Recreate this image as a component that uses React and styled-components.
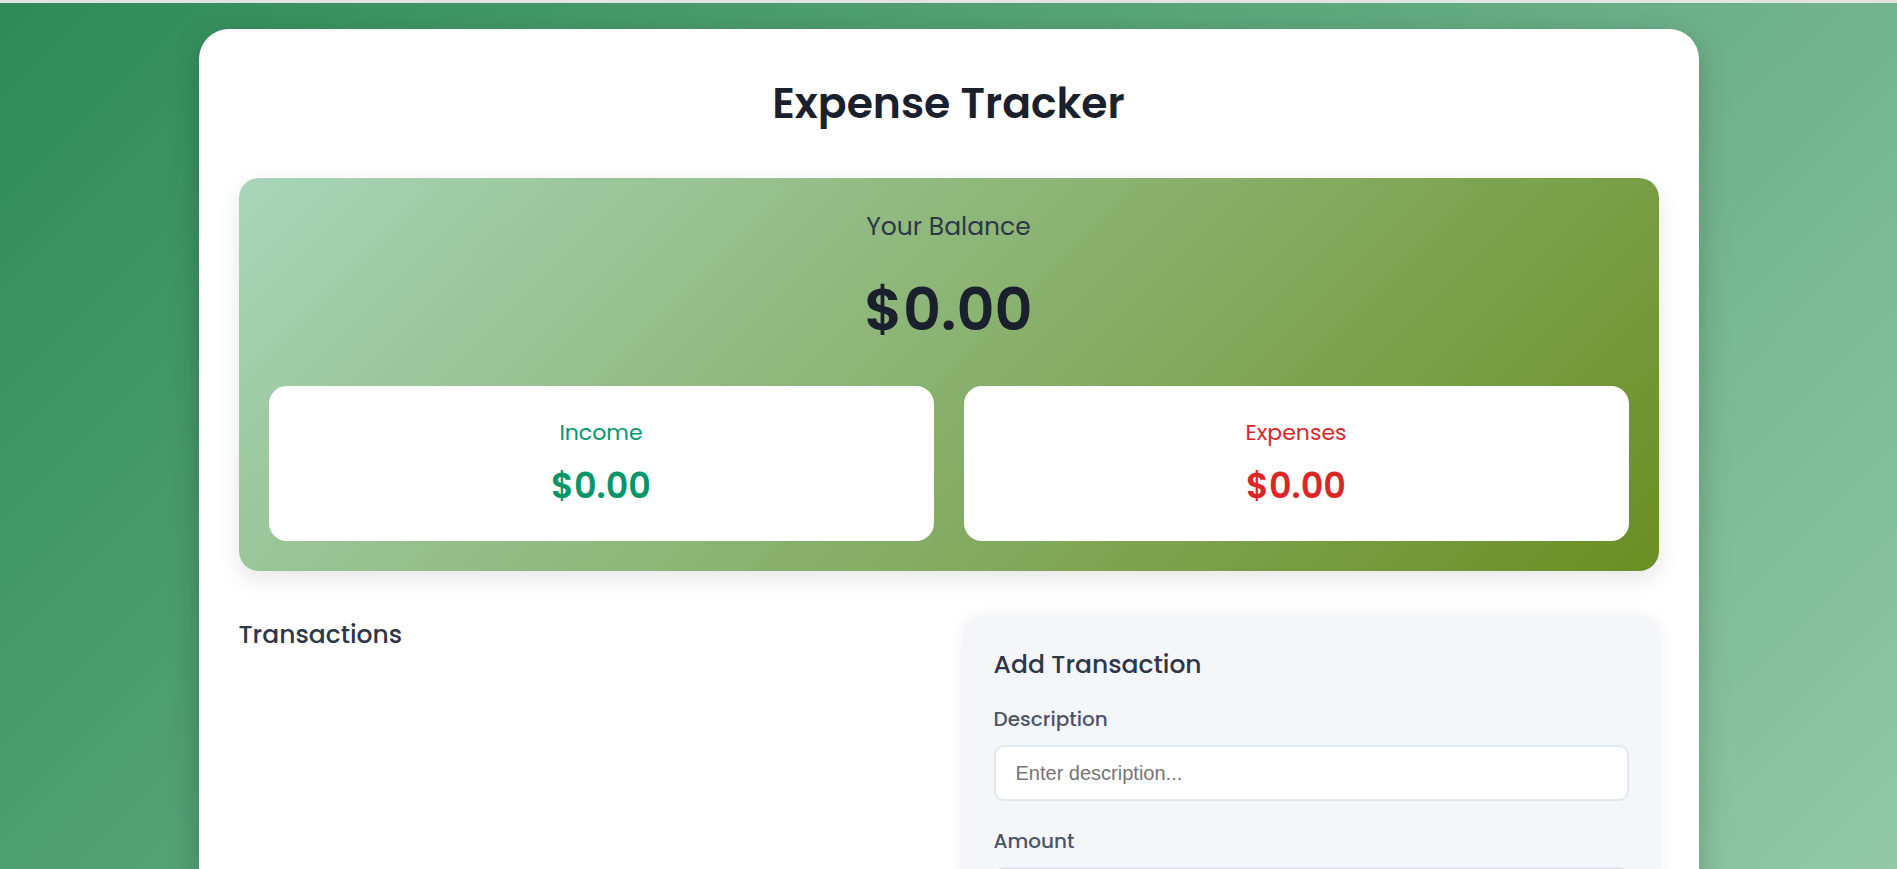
import React, { useState } from "react";
import styled, { createGlobalStyle } from "styled-components";

const GlobalStyle = createGlobalStyle`
  html {
    scrollbar-width: none;
  }
  html::-webkit-scrollbar {
    display: none;
  }
  body {
    margin: 0;
    border-top: 3px solid #e3e3e3;
    background: linear-gradient(135deg, #2e8b57 0%, #a8d5ba 100%);
    font-family: "Poppins", "Inter", "Noto Sans", sans-serif;
    min-height: 1490px;
  }
  * {
    box-sizing: border-box;
  }
`;

const Page = styled.div`
  padding: 26px 20px 60px;
`;

const Card = styled.main`
  max-width: 1500px;
  margin: 0 auto;
  background: #ffffff;
  border-radius: 30px;
  padding: 40px 40px 50px;
  box-shadow: 0 10px 30px rgba(0, 0, 0, 0.22);
`;

const Title = styled.h1`
  margin: 7px 0 48px;
  text-align: center;
  font-size: 42.5px;
  line-height: 54px;
  font-weight: 600;
  color: #1a202c;
`;

const BalancePanel = styled.section`
  background: linear-gradient(135deg, #a8d5ba 0%, #6b8e23 100%);
  border-radius: 20px;
  padding: 30px;
  text-align: center;
  box-shadow: 0 8px 24px rgba(0, 0, 0, 0.1);
`;

const BalanceLabel = styled.h2`
  margin: 0;
  font-size: 25px;
  line-height: 38px;
  font-weight: 400;
  color: #2d3748;
`;

const BalanceAmount = styled.div`
  margin-top: 28px;
  font-size: 59px;
  line-height: 72px;
  font-weight: 600;
  color: #1a202c;
`;

const Summary = styled.div`
  display: grid;
  grid-template-columns: 1fr 1fr;
  gap: 30px;
  margin-top: 40px;
`;

const SummaryCard = styled.div`
  background: #ffffff;
  border-radius: 18px;
  padding: 31px 20px 33px;
  text-align: center;
  color: ${(p) => (p.$type === "income" ? "#059669" : "#dc2626")};
`;

const SummaryLabel = styled.h3`
  margin: 0;
  font-size: 22px;
  line-height: 32px;
  font-weight: 400;
`;

const SummaryAmount = styled.div`
  margin-top: 15px;
  font-size: 35px;
  line-height: 44px;
  font-weight: 600;
`;

const Columns = styled.div`
  display: grid;
  grid-template-columns: 1fr 1fr;
  gap: 30px;
  margin-top: 44px;
  align-items: start;
`;

const SectionTitle = styled.h3`
  margin: 0;
  font-size: 25px;
  line-height: 40px;
  font-weight: 500;
  color: #2d3748;
`;

const List = styled.ul`
  list-style: none;
  margin: 20px 0 0;
  padding: 0;
`;

const FormCard = styled.form`
  background: #f4f6fa;
  border-radius: 18px;
  padding: 30px;
  box-shadow: 0 4px 20px rgba(0, 0, 0, 0.08);
`;

const Field = styled.div`
  margin-top: ${(p) => (p.$first ? "20px" : "26px")};
`;

const Label = styled.label`
  display: block;
  font-size: 20px;
  line-height: 28px;
  font-weight: 500;
  color: #4a5568;
  margin-bottom: 12px;
`;

const Input = styled.input`
  display: block;
  width: 100%;
  height: 56px;
  padding: 0 20px;
  border: 2px solid #e2e8f0;
  border-radius: 10px;
  background: #ffffff;
  font-family: "Liberation Sans", Arial, sans-serif;
  font-size: 20px;
  color: #2d3748;
  outline: none;
  &::placeholder {
    color: #757575;
  }
`;

const Select = styled.select`
  display: block;
  width: 100%;
  height: 56px;
  padding: 0 16px;
  border: 2px solid #e2e8f0;
  border-radius: 10px;
  background: #ffffff;
  font-family: "Liberation Sans", Arial, sans-serif;
  font-size: 20px;
  color: #2d3748;
`;

const SubmitButton = styled.button`
  margin-top: 30px;
  width: 100%;
  height: 56px;
  border: none;
  border-radius: 10px;
  background: #2e8b57;
  color: #ffffff;
  font-family: inherit;
  font-size: 20px;
  font-weight: 500;
`;

const App = () => {
  const [description, setDescription] = useState("");
  const [amount, setAmount] = useState("");
  const [type, setType] = useState("income");

  return (
    <Page>
      <GlobalStyle />
      <Card>
        <Title>Expense Tracker</Title>

        <BalancePanel>
          <BalanceLabel>Your Balance</BalanceLabel>
          <BalanceAmount>$0.00</BalanceAmount>
          <Summary>
            <SummaryCard $type="income">
              <SummaryLabel>Income</SummaryLabel>
              <SummaryAmount>$0.00</SummaryAmount>
            </SummaryCard>
            <SummaryCard $type="expense">
              <SummaryLabel>Expenses</SummaryLabel>
              <SummaryAmount>$0.00</SummaryAmount>
            </SummaryCard>
          </Summary>
        </BalancePanel>

        <Columns>
          <div>
            <SectionTitle>Transactions</SectionTitle>
            <List></List>
          </div>

          <FormCard onSubmit={(e) => e.preventDefault()}>
            <SectionTitle>Add Transaction</SectionTitle>
            <Field $first>
              <Label htmlFor="description">Description</Label>
              <Input
                id="description"
                type="text"
                placeholder="Enter description..."
                value={description}
                onChange={(e) => setDescription(e.target.value)}
              />
            </Field>
            <Field>
              <Label htmlFor="amount">Amount</Label>
              <Input
                id="amount"
                type="number"
                placeholder="Enter amount..."
                value={amount}
                onChange={(e) => setAmount(e.target.value)}
              />
            </Field>
            <Field>
              <Label htmlFor="type">Type</Label>
              <Select
                id="type"
                value={type}
                onChange={(e) => setType(e.target.value)}
              >
                <option value="income">Income</option>
                <option value="expense">Expense</option>
              </Select>
            </Field>
            <SubmitButton type="submit">Add Transaction</SubmitButton>
          </FormCard>
        </Columns>
      </Card>
    </Page>
  );
};

export default App;
